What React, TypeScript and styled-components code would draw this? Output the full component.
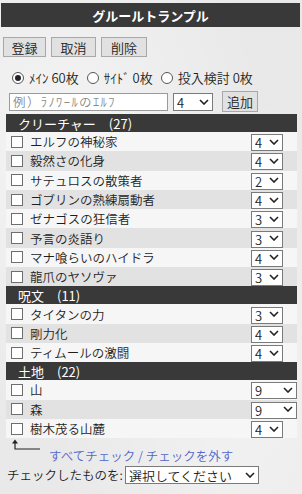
import React, { FC } from 'react';
import styled, { createGlobalStyle } from 'styled-components';

const GlobalStyle = createGlobalStyle`
    html, body {
        margin: 0;
        padding: 0;
    }
    body {
        background: #ececec;
        font-family: "Noto Sans CJK JP", "Noto Sans", sans-serif;
        font-weight: 350;
        color: #1e1e1e;
        font-size: 12.5px;
    }
`;

const Page = styled.div`
    width: 302px;
    height: 494px;
    overflow: hidden;
    background:
        radial-gradient(ellipse at 20% 30%, rgba(255,255,255,0.5), transparent 60%),
        radial-gradient(ellipse at 80% 80%, rgba(255,255,255,0.4), transparent 55%),
        #e9e9e9;
    padding-top: 3px;
    box-sizing: border-box;
`;

const TitleBar = styled.div`
    margin: 0 2px 0 1px;
    height: 24px;
    background: #393939;
    color: #fff;
    font-weight: bold;
    font-size: 13px;
    display: flex;
    align-items: center;
    justify-content: center;
`;

const ButtonRow = styled.div`
    display: flex;
    gap: 5px;
    margin: 10px 0 0 3px;
`;

const Button = styled.button<{ $w: number }>`
    width: ${p => p.$w}px;
    height: 20px;
    padding: 0;
    background: #e1e1e1;
    border: 1px solid #a8a8a8;
    border-radius: 0;
    font-family: inherit;
    font-weight: 350;
    font-size: 13px;
    color: #222;
    line-height: 1;
`;

const RadioRow = styled.div`
    display: flex;
    align-items: center;
    height: 17px;
    margin: 12px 0 0 12px;
    font-size: 13px;
`;

const RadioLabel = styled.label`
    display: flex;
    align-items: center;
    gap: 5px;
    margin-right: 8px;
`;

const Radio = styled.input`
    appearance: none;
    margin: 0;
    width: 12px;
    height: 12px;
    border: 1px solid #555;
    border-radius: 50%;
    background: #fff;
    display: grid;
    place-items: center;

    &:checked::after {
        content: '';
        width: 6px;
        height: 6px;
        border-radius: 50%;
        background: #222;
    }
`;

const AddRow = styled.div`
    display: flex;
    align-items: center;
    height: 21px;
    margin: 5px 0 0 9px;
`;

const TextInput = styled.input`
    width: 159px;
    height: 18px;
    box-sizing: border-box;
    border: 1px solid #9a9a9a;
    background: #fff;
    padding: 0 3px;
    font-family: inherit;
    font-weight: 350;
    font-size: 12.5px;
    letter-spacing: 1.4px;
    margin: 0 5px 0 0;

    &::placeholder {
        color: #8a8a8a;
    }
`;

const SelectWrap = styled.span<{ $w: number; $h?: number }>`
    position: relative;
    display: inline-block;
    width: ${p => p.$w}px;
    height: ${p => p.$h ?? 17}px;

    svg {
        position: absolute;
        right: 4px;
        top: 50%;
        margin-top: -3px;
        pointer-events: none;
    }
`;

const SelectBox = styled.select`
    appearance: none;
    width: 100%;
    height: 100%;
    box-sizing: border-box;
    margin: 0;
    border: 1px solid #7a7a7a;
    border-radius: 0;
    background: #fff;
    padding: 0 0 0 3px;
    font-family: inherit;
    font-weight: 350;
    font-size: 13px;
    color: #222;
    line-height: 1;
`;

const AddButton = styled(Button)`
    height: 21px;
    margin-left: 9px;
`;

const Section = styled.div`
    margin: 0 5px 0 6px;
`;

const SectionHeader = styled.div<{ $first?: boolean }>`
    height: 18px;
    margin-top: ${p => (p.$first ? 2 : 0)}px;
    background: #393939;
    color: #fff;
    font-size: 13px;
    font-weight: 400;
    padding-left: 12px;
    display: flex;
    align-items: center;
`;

const CardRow = styled.div<{ $alt: boolean }>`
    display: grid;
    grid-template-columns: 12px 1fr 46px;
    column-gap: 7px;
    align-items: center;
    height: 19.3px;
    padding-left: 5px;
    background: ${p => (p.$alt ? '#e2e2e2' : '#f6f6f6')};
`;

const Check = styled.input`
    appearance: none;
    margin: 0;
    width: 12px;
    height: 12px;
    border: 1px solid #6e6e6e;
    background: #fff;
`;

const CardName = styled.span`
    font-size: 12.5px;
    white-space: nowrap;
`;

const FooterLinks = styled.div`
    display: flex;
    align-items: flex-end;
    height: 25px;
    margin-left: 11px;

    svg {
        flex-shrink: 0;
        align-self: flex-start;
        margin-top: 1px;
    }
`;

const Links = styled.div`
    margin-left: 4px;
    font-size: 12.5px;
    color: #5468c8;
    line-height: 15px;
    white-space: nowrap;

    a {
        color: inherit;
        text-decoration: none;
    }
`;

const BottomRow = styled.div`
    display: flex;
    align-items: center;
    height: 19px;
    margin: 2px 0 0 7px;
    font-size: 12.5px;
`;

const Chevron: FC = () => (
    <svg width="10" height="6" viewBox="0 0 10 6">
        <path d="M1 1 L5 5 L9 1" fill="none" stroke="#222" strokeWidth="1.6" />
    </svg>
);

const Select: FC<{ value: string; width: number; height?: number }> = ({ value, width, height }) => (
    <SelectWrap $w={width} $h={height}>
        <SelectBox defaultValue={value}>
            <option value={value}>{value}</option>
        </SelectBox>
        <Chevron />
    </SelectWrap>
);

type Card = { name: string; count: number };

const creatures: Card[] = [
    { name: 'エルフの神秘家', count: 4 },
    { name: '毅然さの化身', count: 4 },
    { name: 'サテュロスの散策者', count: 2 },
    { name: 'ゴブリンの熟練扇動者', count: 4 },
    { name: 'ゼナゴスの狂信者', count: 3 },
    { name: '予言の炎語り', count: 3 },
    { name: 'マナ喰らいのハイドラ', count: 4 },
    { name: '龍爪のヤソヴァ', count: 3 },
];

const spells: Card[] = [
    { name: 'タイタンの力', count: 3 },
    { name: '剛力化', count: 4 },
    { name: 'ティムールの激闘', count: 4 },
];

const lands: Card[] = [
    { name: '山', count: 9 },
    { name: '森', count: 9 },
    { name: '樹木茂る山麓', count: 4 },
];

const CardSection: FC<{ title: string; cards: Card[]; first?: boolean }> = ({ title, cards, first }) => (
    <Section>
        <SectionHeader $first={first}>{title}</SectionHeader>
        {cards.map((c, i) => (
            <CardRow key={c.name} $alt={i % 2 === 1}>
                <Check type="checkbox" />
                <CardName>{c.name}</CardName>
                <Select value={String(c.count)} width={c.count > 4 ? 46 : 32} />
            </CardRow>
        ))}
    </Section>
);

const App: FC = () => (
    <>
        <GlobalStyle />
        <Page>
            <TitleBar>グルールトランプル</TitleBar>
            <ButtonRow>
                <Button $w={43}>登録</Button>
                <Button $w={45}>取消</Button>
                <Button $w={46}>削除</Button>
            </ButtonRow>
            <RadioRow>
                <RadioLabel><Radio type="radio" name="deck" defaultChecked />ﾒｲﾝ 60枚</RadioLabel>
                <RadioLabel><Radio type="radio" name="deck" />ｻｲﾄﾞ 0枚</RadioLabel>
                <RadioLabel><Radio type="radio" name="deck" />投入検討 0枚</RadioLabel>
            </RadioRow>
            <AddRow>
                <TextInput placeholder="例）ﾗﾉﾜｰﾙのｴﾙﾌ" />
                <Select value="4" width={40} height={18} />
                <AddButton $w={36}>追加</AddButton>
            </AddRow>
            <CardSection title="クリーチャー　(27)" cards={creatures} first />
            <CardSection title="呪文　(11)" cards={spells} />
            <CardSection title="土地　(22)" cards={lands} />
            <FooterLinks>
                <svg width="34" height="14" viewBox="0 0 34 14">
                    <path d="M4 2 V10 H29" fill="none" stroke="#222" strokeWidth="1.2" />
                    <path d="M4 0.5 L1 4.5 H7 Z" fill="#222" />
                </svg>
                <Links>
                    <a href="#">すべてチェック</a> / <a href="#">チェックを外す</a>
                </Links>
            </FooterLinks>
            <BottomRow>
                チェックしたものを:
                <span style={{ marginLeft: 2 }} />
                <Select value="選択してください" width={134} height={18} />
            </BottomRow>
        </Page>
    </>
);

export default App;
